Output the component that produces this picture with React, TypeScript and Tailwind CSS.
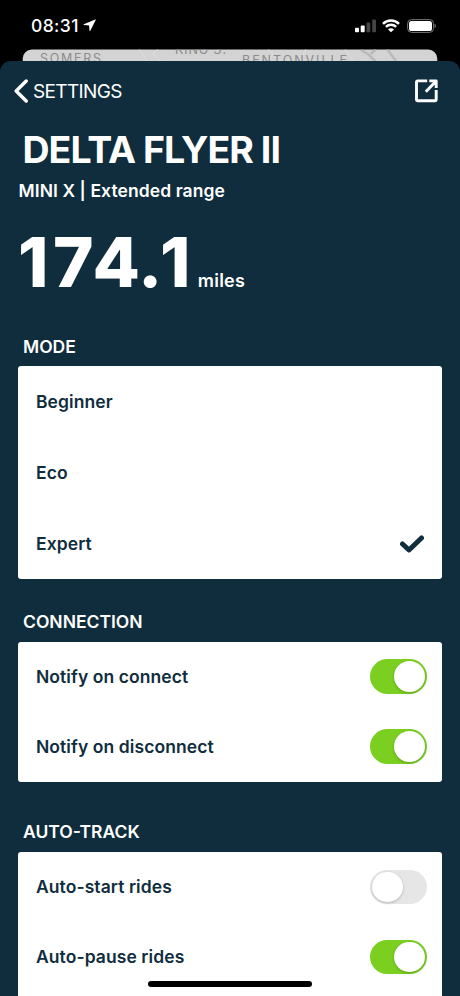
import type { ReactNode } from 'react';

function StatusBar() {
  return (
    <div className="flex h-[49px] shrink-0 items-start justify-between pt-[15px] pr-[24px] pl-[31px] text-white">
      <div className="flex items-center gap-[4px]">
        <span className="text-[17.5px] leading-[21px] font-medium tracking-[0.4px]">08:31</span>
        <svg width="13" height="13" viewBox="0 0 13 13" fill="currentColor">
          <path d="M12.2 0.4 0.8 5.3Q0.1 5.8 0.9 6.1L6.1 6.4 6.5 11.7Q6.8 12.6 7.3 11.8L12.7 1Q12.8 0.2 12.2 0.4Z" />
        </svg>
      </div>
      <div className="flex h-[21px] items-center">
        <svg width="22" height="14" viewBox="0 0 22 14">
          <rect x="0" y="8.8" width="4" height="4.5" rx="1" fill="#fff" />
          <rect x="5.7" y="6.4" width="4" height="6.9" rx="1" fill="#fff" />
          <rect x="11.5" y="3.5" width="3.8" height="9.8" rx="1" fill="#444" />
          <rect x="17.2" y="0.4" width="3.8" height="12.9" rx="1" fill="#444" />
        </svg>
        <svg className="ml-[5px]" width="18" height="14" viewBox="0 0 18 14" fill="none" stroke="#fff" strokeWidth="2.5">
          <path d="M1 4.8a11.4 11.4 0 0 1 16 0" />
          <path d="M3.9 7.9a7.3 7.3 0 0 1 10.2 0" />
          <path d="M9 13.3 6 10.4a4.2 4.2 0 0 1 6 0Z" fill="#fff" stroke="none" />
        </svg>
        <svg className="ml-[7px]" width="29" height="14" viewBox="0 0 29 14">
          <rect x="0.6" y="0.6" width="26" height="12.8" rx="4" fill="none" stroke="#777" strokeWidth="1" />
          <rect x="2" y="2" width="23" height="10" rx="2.6" fill="#fff" />
          <path d="M27.6 4.8q1.4.6 1.4 2.2t-1.4 2.2Z" fill="#777" />
        </svg>
      </div>
    </div>
  );
}

function MapStrip() {
  return (
    <svg className="mx-[22px] block h-[12px] w-[416px] shrink-0" viewBox="22 49 416 12">
      <defs>
        <clipPath id="strip">
          <path d="M22.7 61V58.5a9 9 0 0 1 9-9H428.3a9 9 0 0 1 9 9V61Z" />
        </clipPath>
      </defs>
      <g clipPath="url(#strip)">
        <rect x="22" y="49" width="416" height="12" fill="#d3d3d3" />
        <path d="M139 49l8 12M158 49l-5 5 8 7M268 49l5 5-4 7M300 61l6-12M345 49l8 12" stroke="#dedede" fill="none" />
        <path d="M361 50l7 4 8 8M376 49l-5 5M387 49l9 12" stroke="#b9b9b9" strokeWidth="2.5" fill="none" />
        <g fill="#8c8c8c" fontFamily="Inter, sans-serif" fontSize="12.5">
          <text x="40" y="63.3" textLength="61">SOMERS</text>
          <text x="175" y="53.8" textLength="51">KING S.</text>
          <text x="242" y="64.5" textLength="105">BENTONVILLE</text>
        </g>
      </g>
    </svg>
  );
}

function Toggle({ on }: { on: boolean }) {
  return (
    <span className={`flex h-[34.5px] w-[56.5px] items-center rounded-full px-[2px] ${on ? 'justify-end bg-[#7acf20]' : 'justify-start bg-[#e6e6e6]'}`}>
      <span className="size-[30.5px] rounded-full bg-white shadow-[0_1px_3px_rgba(0,0,0,0.22)]" />
    </span>
  );
}

function Row({ label, tall, children }: { label: ReactNode; tall?: boolean; children?: ReactNode }) {
  return (
    <div className={`flex items-center justify-between pr-[15.5px] pl-[18px] tracking-[0.08px] text-[#102d3d] ${tall ? 'h-[71px]' : 'h-[70px]'}`}>
      {label}
      {children}
    </div>
  );
}

export default function App() {
  return (
    <div className="relative flex h-[996px] w-[460px] flex-col overflow-hidden bg-black font-['Inter',sans-serif]">
      <StatusBar />
      <MapStrip />
      <main className="-mt-[0.5px] flex min-h-0 flex-1 flex-col rounded-t-[11px] bg-[#102d3d] px-[18px] text-[17.5px] leading-[22px] font-semibold text-white">
        <header className="-mx-[4px] flex h-[61px] shrink-0 items-center justify-between">
          <div className="flex items-center gap-[5px]">
            <svg width="14" height="24" viewBox="0 0 14 24" fill="none" stroke="#fff" strokeWidth="3.4" strokeLinecap="round" strokeLinejoin="round">
              <path d="M12.2 2 2.2 12l10 10" />
            </svg>
            <span className="pt-[1.5px] text-[19px] font-normal tracking-[-0.65px]">SETTINGS</span>
          </div>
          <svg className="mr-[7px]" width="25" height="24" viewBox="0 0 25 24" fill="none" stroke="#fff" strokeWidth="2.9" strokeLinecap="butt" strokeLinejoin="round">
            <path d="M13.2 1.9H3.5a1 1 0 0 0-1 1V20.7a1 1 0 0 0 1 1H21.2a1 1 0 0 0 1-1V11" />
            <path d="M15.3 1.9H22.2V9M21.7 2.4 11.8 12.8" />
          </svg>
        </header>
        <h1 className="mt-[6px] h-[44px] shrink-0 pl-[4.5px] text-[37.5px] leading-[44px] font-bold tracking-[-0.96px] whitespace-nowrap">DELTA FLYER II</h1>
        <p className="mt-[8.5px] shrink-0 pl-[0.5px] tracking-[0.08px] whitespace-nowrap">MINI X | Extended range</p>
        <div className="mt-[19.5px] flex h-[80px] shrink-0 items-baseline">
          <span className="text-[69px] leading-[80px] font-extrabold whitespace-nowrap">
            <span className="tracking-[4.5px]">1</span>
            <span className="tracking-[-1px]">7</span>
            <span className="tracking-[-2px]">4</span>
            <span className="tracking-[-2.5px]">.</span>
            <span className="tracking-[-0.5px]">1</span>
          </span>
          <span className="ml-[8px] text-[18px] tracking-[0.2px]">miles</span>
        </div>
        <h2 className="mt-[34px] ml-[5px] shrink-0">MODE</h2>
        <section className="mt-[8.5px] shrink-0 rounded-[3px] bg-white">
          <Row tall label={<span>Beginner</span>} />
          <Row tall label={<span>Eco</span>} />
          <Row tall label={<span>Expert</span>}>
            <svg className="mr-[2px]" width="26" height="20" viewBox="0 0 26 20" fill="none" stroke="#102d3d" strokeWidth="5" strokeLinecap="round" strokeLinejoin="round">
              <path d="M3.5 10 10 16 22.5 4" />
            </svg>
          </Row>
        </section>
        <h2 className="mt-[31.5px] ml-[5px] shrink-0">CONNECTION</h2>
        <section className="mt-[9px] shrink-0 rounded-[3px] bg-white">
          <Row label={<span>Notify on connect</span>}><Toggle on /></Row>
          <Row label={<span>Notify on disconnect</span>}><Toggle on /></Row>
        </section>
        <h2 className="mt-[39.5px] ml-[5px] shrink-0">AUTO-TRACK</h2>
        <section className="mt-[9px] h-[160px] shrink-0 rounded-t-[3px] bg-white">
          <Row label={<span>Auto-start rides</span>}><Toggle on={false} /></Row>
          <Row label={<span>Auto-pause rides</span>}><Toggle on /></Row>
        </section>
      </main>
      <div className="absolute top-[981px] left-[148px] h-[6px] w-[164px] rounded-full bg-black" />
    </div>
  );
}
